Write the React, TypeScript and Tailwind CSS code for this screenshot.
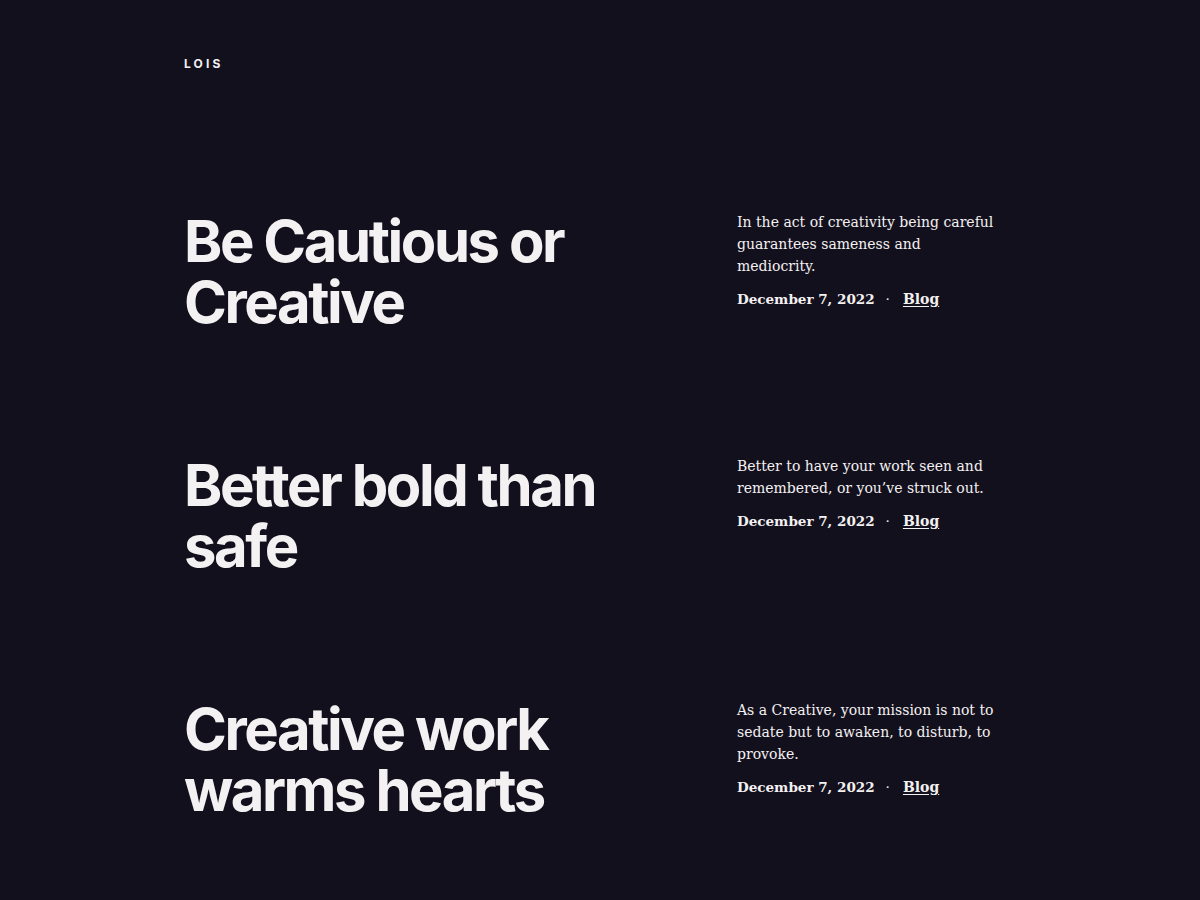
const posts = [
  {
    title: ["Be Cautious or", "Creative"],
    excerpt: "In the act of creativity being careful guarantees sameness and mediocrity.",
    date: "December 7, 2022",
  },
  {
    title: ["Better bold than", "safe"],
    excerpt: "Better to have your work seen and remembered, or you\u2019ve struck out.",
    date: "December 7, 2022",
  },
  {
    title: ["Creative work", "warms hearts"],
    excerpt: "As a Creative, your mission is not to sedate but to awaken, to disturb, to provoke.",
    date: "December 7, 2022",
  },
];

const App = () => {
  return (
    <div className="min-h-[900px] w-full bg-[#13101e] text-[#f3f1f1]">
      <div className="px-[184px] pt-[57px]">
        <header className="font-['Inter',sans-serif] text-[12px] font-bold leading-[14px] tracking-[0.26em]">
          LOIS
        </header>

        <main className="mt-[140px] flex flex-col gap-[122px]">
          {posts.map((post) => (
            <article key={post.title[0]} className="flex">
              <h2 className="w-[553px] shrink-0 font-['Inter',sans-serif] text-[58px] font-bold leading-[61px] tracking-[-0.042em]">
                {post.title[0]}
                <br />
                {post.title[1]}
              </h2>
              <div className="w-[262px] font-['DejaVu_Serif',serif]">
                <p className="text-[14px] leading-[22px]">{post.excerpt}</p>
                <div className="mt-[11px] flex items-center text-[13.5px] font-bold leading-[22px]">
                  <span>{post.date}</span>
                  <span className="ml-[11px] mr-[13px] font-normal">&middot;</span>
                  <a href="#" className="text-[14px] underline underline-offset-2">
                    Blog
                  </a>
                </div>
              </div>
            </article>
          ))}
        </main>
      </div>
    </div>
  );
};

export default App;
